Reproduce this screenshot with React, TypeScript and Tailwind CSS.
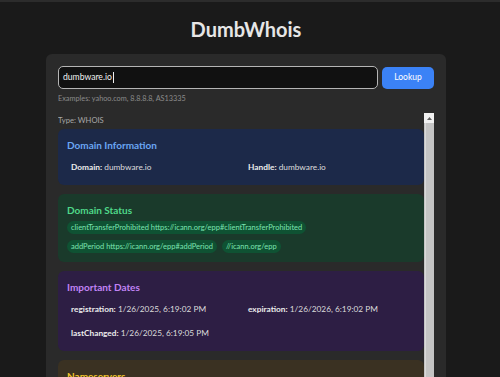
const statuses = [
  "clientTransferProhibited https://icann.org/epp#clientTransferProhibited",
  "addPeriod https://icann.org/epp#addPeriod",
  "//icann.org/epp",
];

function Field({ label, value }: { label: string; value: string }) {
  return (
    <div className="px-[4px] py-[2px] text-[8.3px] leading-[14px] whitespace-nowrap text-[#dcdcdc]">
      <span className="font-bold text-[#ececec]">{label}:</span> {value}
    </div>
  );
}

export default function App() {
  return (
    <div
      className="min-h-screen bg-[#1a1a1a] border-t-2 border-[#2c2c2c] text-[#e5e5e5]"
      style={{ fontFamily: 'Lato, "Open Sans", sans-serif' }}
    >
      <h1 className="w-[492px] pt-[14px] text-center text-[20px] leading-[26px] font-bold text-[#e6e6e6]">
        DumbWhois
      </h1>

      <div className="ml-[46px] mt-[12px] w-[400px] rounded-[6px] bg-[#2a2a2a] px-[12px] pt-[12px] pb-[12px]">
        <div className="flex items-center gap-[4px]">
          <div className="flex h-[23px] flex-1 items-center rounded-[5px] border border-[#b5b5b5] bg-[#111111] px-[4px] text-[8.6px] text-[#f0f0f0]">
            dumbware.io<span className="ml-[1px] h-[11px] w-px bg-[#f0f0f0]" />
          </div>
          <button className="h-[22px] w-[52px] rounded-[5px] bg-[#3b82f6] text-[8.5px] text-white">
            Lookup
          </button>
        </div>
        <p className="mt-[4px] text-[7.3px] leading-[12px] text-[#8a8a8a]">
          Examples: yahoo.com, 8.8.8.8, AS13335
        </p>

        <div className="mt-[8px] flex h-[300px] overflow-hidden">
          <div className="flex-1">
            <p className="mt-[1px] text-[7.6px] leading-[12px] text-[#a8a8a8]">Type: WHOIS</p>

            <section className="mt-[3px] rounded-[6px] bg-[#1c2949] p-[9px]">
              <h2 className="mb-[6px] text-[10px] leading-[14px] font-bold text-[#6aa6f4]">
                Domain Information
              </h2>
              <div className="grid grid-cols-2 gap-[6px]">
                <Field label="Domain" value="dumbware.io" />
                <Field label="Handle" value="dumbware.io" />
              </div>
            </section>

            <section className="mt-[9px] rounded-[6px] bg-[#1a3a2b] p-[9px]">
              <h2 className="mb-[4px] text-[10px] leading-[14px] font-bold text-[#4fd889]">
                Domain Status
              </h2>
              <div className="flex flex-wrap gap-x-[5px] gap-y-[6px]">
                {statuses.map((s) => (
                  <span
                    key={s}
                    className="h-[13px] rounded-full bg-[#0f5233] px-[4px] text-[7.5px] leading-[13px] text-[#7be3b0]"
                  >
                    {s}
                  </span>
                ))}
              </div>
            </section>

            <section className="mt-[9px] rounded-[6px] bg-[#2d1e44] p-[9px]">
              <h2 className="mb-[6px] text-[10px] leading-[14px] font-bold text-[#c183f5]">
                Important Dates
              </h2>
              <div className="grid grid-cols-2 gap-[6px]">
                <Field label="registration" value="1/26/2025, 6:19:02 PM" />
                <Field label="expiration" value="1/26/2026, 6:19:02 PM" />
                <Field label="lastChanged" value="1/26/2025, 6:19:05 PM" />
              </div>
            </section>

            <section className="mt-[9px] rounded-[6px] bg-[#3a3122] p-[9px]">
              <h2 className="mb-[6px] text-[10px] leading-[14px] font-bold text-[#f2c52c]">
                Nameservers
              </h2>
            </section>
          </div>

          <div className="flex w-[10px] flex-col bg-[#c4c4c4]">
            <div className="flex h-[10px] items-center justify-center bg-[#f1f1f1]">
              <svg width="5" height="3" viewBox="0 0 5 3">
                <path d="M0 3 L2.5 0 L5 3 Z" fill="#606060" />
              </svg>
            </div>
            <div className="mx-[1px] flex-1 border-l border-[#d9d9d9]" />
          </div>
        </div>
      </div>
    </div>
  );
}
